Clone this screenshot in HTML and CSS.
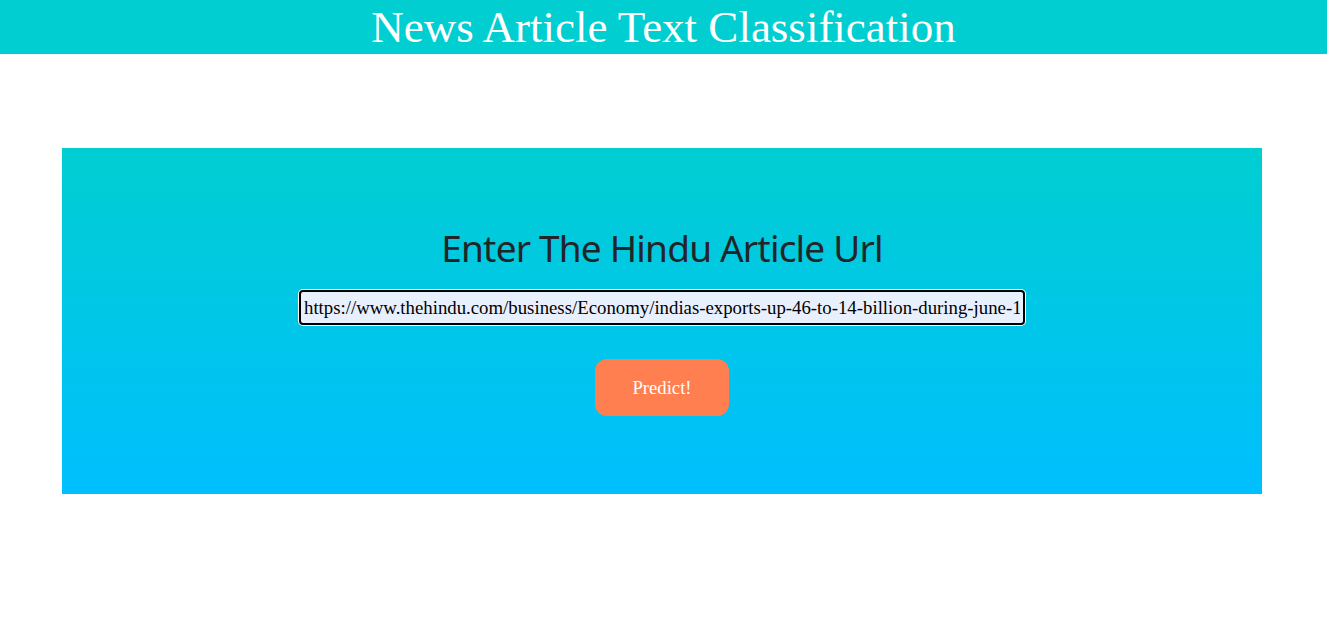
FILE: index.html
```html
<!DOCTYPE html>
<html>
<head>
<meta charset="utf-8">
<link rel="stylesheet" href="styles.css">
</head>
<body>
<header class="topbar">News Article Text Classification</header>
<main class="panel">
  <h2 class="prompt">Enter The Hindu Article Url</h2>
  <input class="url" type="text" value="https://www.thehindu.com/business/Economy/indias-exports-up-46-to-14-billion-during-june-1">
  <button class="predict">Predict!</button>
</main>
</body>
</html>
```
FILE: styles.css
```css
html, body {
  margin: 0;
  padding: 0;
  background: #fff;
}
.topbar {
  background: #00CED1;
  color: #fff;
  font-family: "Liberation Serif", serif;
  font-size: 45px;
  line-height: 54px;
  height: 54px;
  text-align: center;
  overflow: hidden;
}
.panel {
  width: 1200px;
  height: 346px;
  margin: 94px 0 0 62px;
  background: linear-gradient(to bottom, #00CED1, #00BFFF);
  display: flex;
  flex-direction: column;
  align-items: center;
  box-sizing: border-box;
  padding-top: 76px;
}
.prompt {
  margin: 0;
  font-family: "Noto Sans", sans-serif;
  font-weight: 400;
  font-size: 37px;
  letter-spacing: -0.8px;
  line-height: 48px;
  color: #212529;
}
.url {
  margin-top: 18px;
  width: 726px;
  height: 35px;
  box-sizing: border-box;
  border: 2px solid #000;
  border-radius: 4px;
  box-shadow: 0 0 0 1px #fff;
  background: #E8F0FE;
  font-family: "Liberation Serif", serif;
  font-size: 18.8px;
  color: #000;
  padding: 0 3px;
  outline: none;
}
.predict {
  margin-top: 34px;
  width: 134px;
  height: 57px;
  border: none;
  border-radius: 12px;
  background: #FF7F50;
  color: #fff;
  font-family: "Liberation Serif", serif;
  font-size: 18.7px;
}
```
